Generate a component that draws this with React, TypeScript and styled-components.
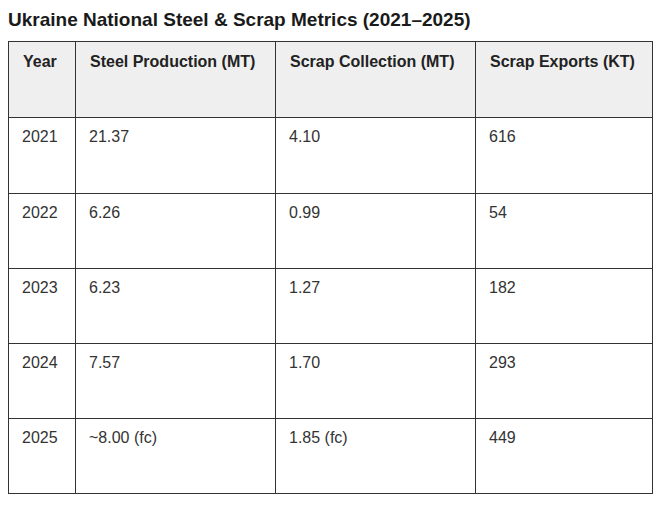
import React from "react";
import styled, { createGlobalStyle } from "styled-components";

const Global = createGlobalStyle`
  html, body { margin: 0; padding: 0; background: #ffffff; }
  body { padding: 8px; font-family: "Liberation Sans", Arial, sans-serif; }
`;

const Title = styled.h2`
  margin: 1px 0 10px 0;
  font-size: 19px;
  font-weight: 700;
  line-height: 22px;
  color: #1a1a1a;
`;

const Table = styled.table`
  border-collapse: collapse;
  table-layout: fixed;
  width: 644px;
`;

const HeadRow = styled.tr`
  height: 76px;
  background: #efefef;
`;

const Row = styled.tr<{ $h: number }>`
  height: ${(p) => p.$h}px;
`;

const Th = styled.th`
  border: 1px solid #333;
  padding: 11px 14px;
  text-align: left;
  vertical-align: top;
  font-size: 16px;
  font-weight: 700;
  line-height: 18px;
  color: #222;
`;

const Td = styled.td`
  border: 1px solid #333;
  padding: 10px 14px 10px 13px;
  vertical-align: top;
  font-size: 16px;
  line-height: 18px;
  color: #333;
`;

const rows = [
  ["2021", "21.37", "4.10", "616"],
  ["2022", "6.26", "0.99", "54"],
  ["2023", "6.23", "1.27", "182"],
  ["2024", "7.57", "1.70", "293"],
  ["2025", "~8.00 (fc)", "1.85 (fc)", "449"],
];

export default function App() {
  return (
    <>
      <Global />
      <Title>Ukraine National Steel &amp; Scrap Metrics (2021–2025)</Title>
      <Table>
        <colgroup>
          <col style={{ width: 67 }} />
          <col style={{ width: 200 }} />
          <col style={{ width: 200 }} />
          <col style={{ width: 177 }} />
        </colgroup>
        <thead>
          <HeadRow>
            <Th>Year</Th>
            <Th>Steel Production (MT)</Th>
            <Th>Scrap Collection (MT)</Th>
            <Th>Scrap Exports (KT)</Th>
          </HeadRow>
        </thead>
        <tbody>
          {rows.map((r, idx) => (
            <Row key={r[0]} $h={idx === 0 ? 76 : 75}>
              {r.map((c, i) => (
                <Td key={i}>{c}</Td>
              ))}
            </Row>
          ))}
        </tbody>
      </Table>
    </>
  );
}
